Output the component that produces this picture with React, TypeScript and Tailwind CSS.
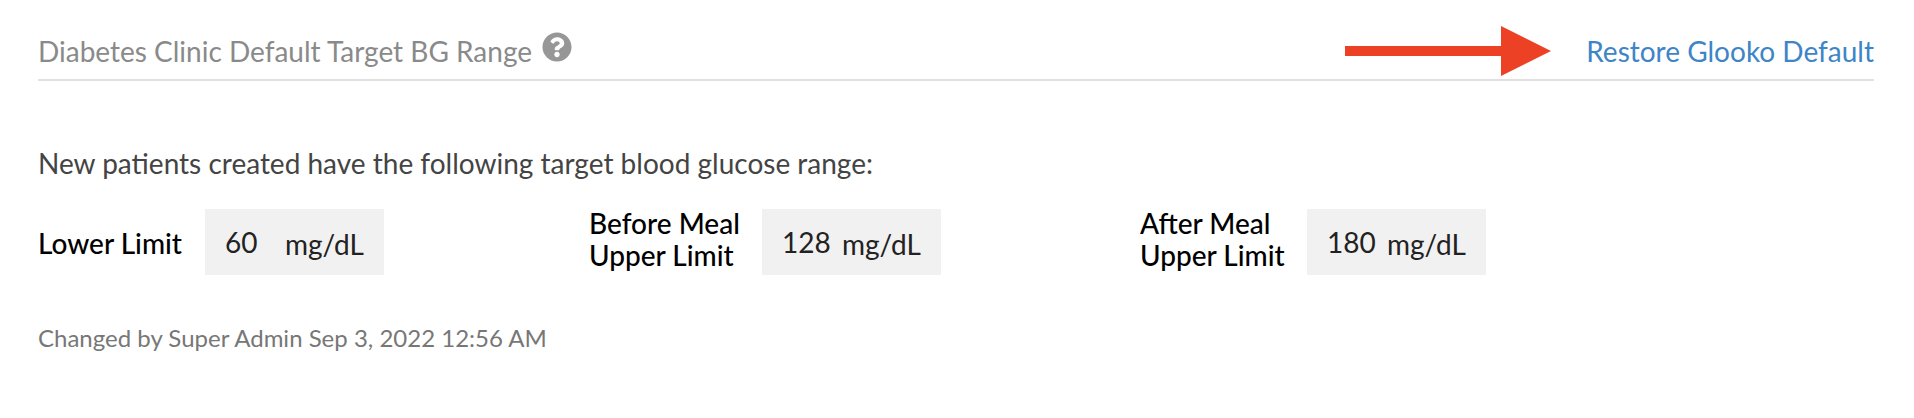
import { FaQuestionCircle } from 'react-icons/fa';

const fields = [
  { label: ['Lower Limit'], value: '60', width: 'w-[551px]', labelClass: 'w-[167px] pt-[2px]' },
  { label: ['Before Meal', 'Upper Limit'], value: '128', width: 'w-[551px]', labelClass: 'w-[173px] mb-[6px]' },
  { label: ['After Meal', 'Upper Limit'], value: '180', width: '', labelClass: 'w-[167px] mb-[6px]' },
];

function Arrow() {
  return (
    <svg width="206" height="50" viewBox="0 0 206 50" className="block">
      <rect x="0" y="20" width="157" height="10" fill="#ec4125" />
      <polygon points="156,0 206,25 156,50" fill="#ec4125" />
    </svg>
  );
}

export default function App() {
  return (
    <div className="h-[418px] bg-white px-[38px] pr-[40px] font-['Lato',sans-serif]">
      <div className="flex h-[81px] items-center justify-between border-b-2 border-[#e0e0e0]">
        <div className="flex items-center pt-[22px] text-[28px] text-[#8a8a8a]">
          <h2 className="leading-[32px]">Diabetes Clinic Default Target BG Range</h2>
          <FaQuestionCircle className="mb-[8px] ml-[10px] h-[30px] w-[30px] text-[#979797]" />
        </div>
        <div className="flex items-center gap-[35px] pt-[22px]">
          <Arrow />
          <a href="#" className="text-[28px] leading-[32px] text-[#3d85c6]">
            Restore Glooko Default
          </a>
        </div>
      </div>

      <p className="mt-[66px] text-[28px] leading-[32px] text-[#444444]">
        New patients created have the following target blood glucose range:
      </p>

      <div className="mt-[30px] flex h-[66px]">
        {fields.map((field) => (
          <div key={field.value} className={`flex items-center ${field.width}`}>
            <div className={`text-[28px] font-medium leading-[32px] text-black ${field.labelClass}`}>
              {field.label.map((line) => (
                <div key={line}>{line}</div>
              ))}
            </div>
            <div className="flex h-[66px] w-[179px] items-center bg-[#f1f1f1] text-[28px] text-[#222222]">
              <span className="w-[79px] pl-[20px]">{field.value}</span>
              <span className="pl-[1px] pt-[4px]">mg/dL</span>
            </div>
          </div>
        ))}
      </div>

      <p className="mt-[48px] text-[24px] leading-[30px] text-[#777777]">
        Changed by Super Admin Sep 3, 2022 12:56 AM
      </p>
    </div>
  );
}
